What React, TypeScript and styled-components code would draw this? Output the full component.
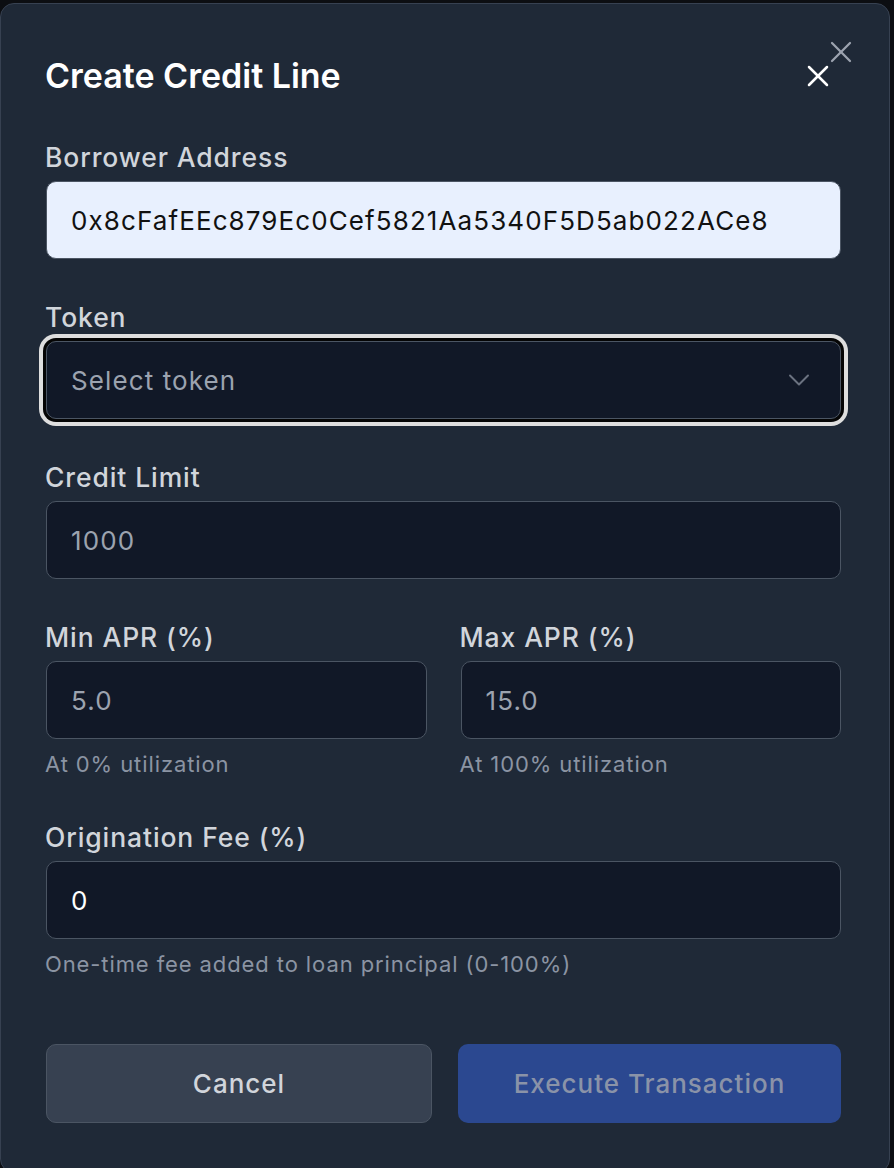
import React from "react";
import styled, { createGlobalStyle } from "styled-components";

const Global = createGlobalStyle`
  html, body { margin: 0; padding: 0; background: #0c0e12; }
  body { font-family: Inter, "Noto Sans", sans-serif; -webkit-font-smoothing: antialiased; }
  * { box-sizing: border-box; }
`;

const Page = styled.div`
  width: 894px;
  height: 1168px;
  overflow: hidden;
  padding-top: 3px;
`;

const Modal = styled.div`
  position: relative;
  width: 890px;
  height: 1170px;
  background: #1f2937;
  border: 1px solid #374151;
  border-radius: 14px;
  padding: 50px 48px 0 45px;
  display: flex;
  flex-direction: column;
`;

const Header = styled.div`
  display: flex;
  align-items: center;
  justify-content: space-between;
  height: 44px;
  margin-bottom: 42px;
`;

const Title = styled.h2`
  margin: 0;
  margin-left: -1px;
  font-size: 34px;
  line-height: 44px;
  font-weight: 600;
  color: #ffffff;
  letter-spacing: 0px;
`;

const IconButton = styled.button<{ $tone: "light" | "muted" }>`
  background: none;
  border: none;
  padding: 0;
  display: flex;
  cursor: pointer;
  color: ${(p) => (p.$tone === "light" ? "#ffffff" : "#9ca3af")};
`;

const CornerClose = styled(IconButton)`
  position: absolute;
  top: 30px;
  right: 30px;
`;

const Form = styled.div`
  display: flex;
  flex-direction: column;
  gap: 41px;
`;

const Field = styled.div`
  display: flex;
  flex-direction: column;
  min-width: 0;
`;

const Label = styled.label`
  font-size: 26.5px;
  line-height: 34px;
  font-weight: 500;
  color: #d1d5db;
  margin-bottom: 7px;
  margin-left: -1px;
  letter-spacing: 0.9px;
`;

const Input = styled.div<{ $variant?: "autofill" | "dark"; $muted?: boolean }>`
  height: 78px;
  border-radius: 10px;
  border: 1px solid #4b5563;
  background: ${(p) => (p.$variant === "autofill" ? "#e8f0fe" : "#111827")};
  color: ${(p) => (p.$variant === "autofill" ? "#111111" : p.$muted ? "#9ca3af" : "#ffffff")};
  padding: 0 24px;
  display: flex;
  align-items: center;
  font-size: 26px;
  letter-spacing: 1.1px;
  white-space: nowrap;
  overflow: hidden;
`;

const Select = styled(Input)`
  justify-content: space-between;
  box-shadow: 0 0 0 3px #050505, 0 0 0 7px #dedede;
  border-radius: 10px;
  color: #9ca3af;
  padding-right: 23px;
`;

const Row = styled.div`
  display: grid;
  grid-template-columns: 1fr 1fr;
  gap: 34px;
`;

const Hint = styled.div`
  font-size: 22px;
  line-height: 30px;
  color: #8b94a3;
  margin-top: 10px;
  margin-left: -1px;
  letter-spacing: 0.9px;
`;

const Actions = styled.div`
  display: grid;
  grid-template-columns: 386px 1fr;
  gap: 26px;
  margin-top: 65px;
`;

const Button = styled.button<{ $primary?: boolean }>`
  height: 79px;
  border-radius: 10px;
  font-family: inherit;
  font-size: 26px;
  font-weight: 500;
  letter-spacing: 1px;
  border: ${(p) => (p.$primary ? "none" : "1px solid #4b5563")};
  background: ${(p) => (p.$primary ? "#2b4890" : "#374151")};
  color: ${(p) => (p.$primary ? "#8a93a8" : "#d1d5db")};
`;

const XIcon = ({ size, stroke }: { size: number; stroke: number }) => (
  <svg width={size} height={size} viewBox="0 0 24 24" fill="none" stroke="currentColor" strokeWidth={stroke} strokeLinecap="round" strokeLinejoin="round">
    <path d="M18 6 6 18" />
    <path d="m6 6 12 12" />
  </svg>
);

const Chevron = () => (
  <svg width="36" height="36" viewBox="0 0 24 24" fill="none" stroke="#6b7280" strokeWidth={1.3} strokeLinecap="round" strokeLinejoin="round">
    <path d="m6 9 6 6 6-6" />
  </svg>
);

export default function App() {
  return (
    <Page>
      <Global />
      <Modal>
        <CornerClose $tone="muted" aria-label="Close">
          <XIcon size={36} stroke={1.5} />
        </CornerClose>
        <Header>
          <Title>Create Credit Line</Title>
          <IconButton $tone="light" aria-label="Close" style={{ marginRight: 5 }}>
            <XIcon size={36} stroke={1.7} />
          </IconButton>
        </Header>
        <Form>
          <Field>
            <Label>Borrower Address</Label>
            <Input $variant="autofill">0x8cFafEEc879Ec0Cef5821Aa5340F5D5ab022ACe8</Input>
          </Field>
          <Field>
            <Label>Token</Label>
            <Select>
              <span>Select token</span>
              <Chevron />
            </Select>
          </Field>
          <Field>
            <Label>Credit Limit</Label>
            <Input $muted>1000</Input>
          </Field>
          <Row>
            <Field>
              <Label>Min APR (%)</Label>
              <Input $muted>5.0</Input>
              <Hint>At 0% utilization</Hint>
            </Field>
            <Field>
              <Label>Max APR (%)</Label>
              <Input $muted>15.0</Input>
              <Hint>At 100% utilization</Hint>
            </Field>
          </Row>
          <Field>
            <Label>Origination Fee (%)</Label>
            <Input>0</Input>
            <Hint>One-time fee added to loan principal (0-100%)</Hint>
          </Field>
        </Form>
        <Actions>
          <Button>Cancel</Button>
          <Button $primary>Execute Transaction</Button>
        </Actions>
      </Modal>
    </Page>
  );
}
